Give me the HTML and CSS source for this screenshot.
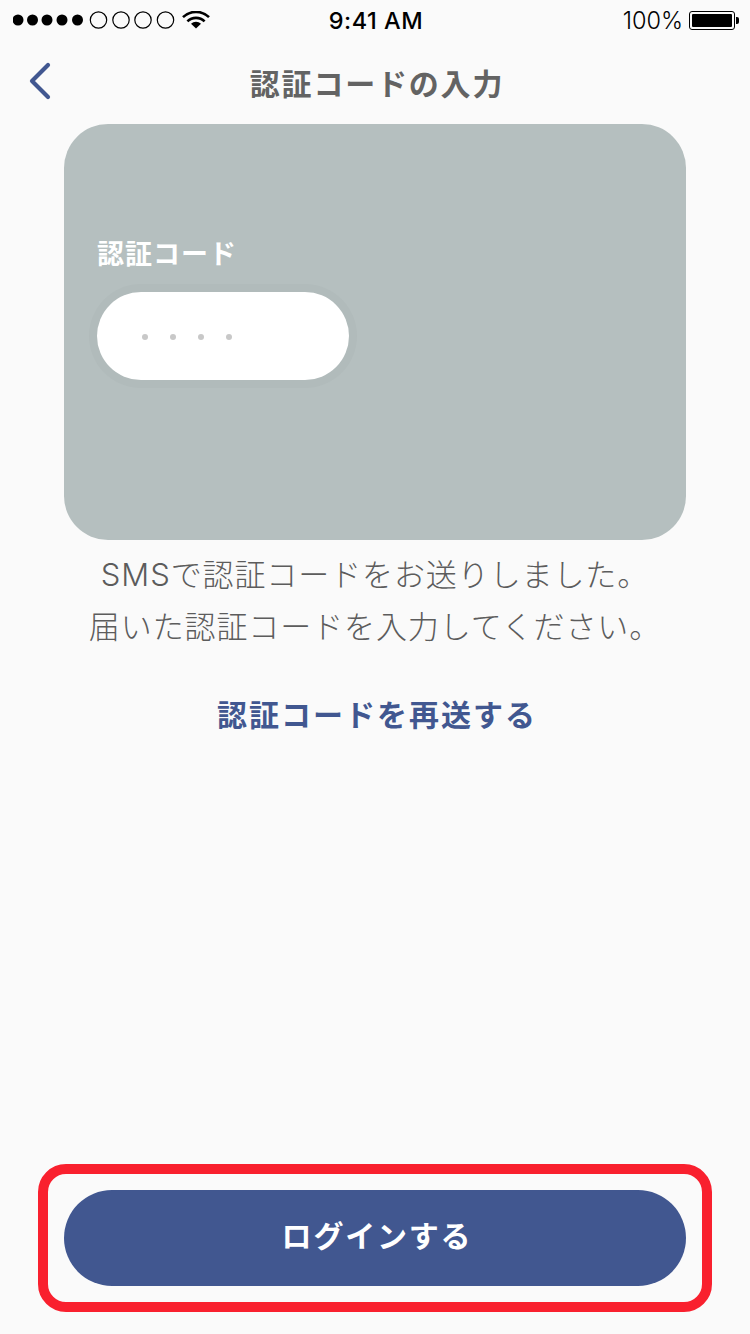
FILE: index.html
```html
<!DOCTYPE html>
<html lang="ja">
<head>
    <meta charset="UTF-8">
    <meta name="viewport" content="width=device-width, initial-scale=1.0">
    <title>認証コードの入力</title>
    <link rel="stylesheet" href="styles.css">
</head>
<body>
    <div class="screen">
        <div class="statusbar">
            <div class="status-left">
                <svg class="signal" width="163" height="20" viewBox="0 0 163 20">
                    <circle cx="5" cy="10" r="5.5" fill="#000"/>
                    <circle cx="19.5" cy="10" r="5.5" fill="#000"/>
                    <circle cx="34" cy="10" r="5.5" fill="#000"/>
                    <circle cx="49" cy="10" r="5.5" fill="#000"/>
                    <circle cx="64.5" cy="10" r="5.5" fill="#000"/>
                    <circle cx="85.5" cy="10" r="8.2" fill="none" stroke="#000" stroke-width="1.2"/>
                    <circle cx="108" cy="10" r="8.2" fill="none" stroke="#000" stroke-width="1.2"/>
                    <circle cx="130" cy="10" r="8.2" fill="none" stroke="#000" stroke-width="1.2"/>
                    <circle cx="152.5" cy="10" r="8.2" fill="none" stroke="#000" stroke-width="1.2"/>
                </svg>
                <svg class="wifi" width="28" height="18" viewBox="0 0 28 18">
                    <path d="M1 6.2a18.5 18.5 0 0 1 26 0" fill="none" stroke="#000" stroke-width="2.6"/>
                    <path d="M5.4 10.4a12.2 12.2 0 0 1 17.2 0" fill="none" stroke="#000" stroke-width="2.6"/>
                    <path d="M9 12.8a7.2 7.2 0 0 1 10 0L14 17.6z" fill="#000"/>
                </svg>
            </div>
            <div class="status-time">9:41 AM</div>
            <div class="status-right">
                <span>100%</span>
                <div class="battery"><div class="battery-level"></div></div>
                <div class="battery-tip"></div>
            </div>
        </div>

        <div class="navbar">
            <svg class="back" width="24" height="38" viewBox="0 0 24 38">
                <path d="M20 3L4 19l16 16" fill="none" stroke="#415790" stroke-width="4.2" stroke-linecap="round" stroke-linejoin="round"/>
            </svg>
            <h1 class="title">認証コードの入力</h1>
        </div>

        <div class="card">
            <label class="code-label" for="code">認証コード</label>
            <div class="code-input" id="code">
                <span class="dot"></span>
                <span class="dot"></span>
                <span class="dot"></span>
                <span class="dot"></span>
            </div>
        </div>

        <p class="message">SMSで認証コードをお送りしました。<br>届いた認証コードを入力してください。</p>
        <a class="resend" href="#">認証コードを再送する</a>

        <div class="footer">
            <div class="highlight">
                <button class="login" type="button">ログインする</button>
            </div>
        </div>
    </div>
</body>
</html>
```

FILE: styles.css
```css
* {
    box-sizing: border-box;
}
body {
    margin: 0;
    background: #fafafa;
    font-family: "Noto Sans CJK JP", "Noto Sans", sans-serif;
}
.screen {
    width: 750px;
    height: 1334px;
    display: flex;
    flex-direction: column;
    overflow: hidden;
}
.statusbar {
    height: 40px;
    padding: 0 11px 0 13px;
    display: grid;
    grid-template-columns: 1fr auto 1fr;
    align-items: center;
    font-family: "Inter", "Liberation Sans", sans-serif;
    font-size: 23.5px;
    color: #000;
}
.status-left {
    display: flex;
    align-items: center;
    gap: 6px;
}
.status-time {
    font-weight: 500;
    letter-spacing: 0.5px;
}
.status-right {
    display: flex;
    align-items: center;
    justify-content: flex-end;
    font-weight: 300;
}
.battery {
    width: 46px;
    height: 19px;
    margin-left: 6px;
    padding: 2px;
    border: 1px solid #000;
    border-radius: 3px;
}
.battery-level {
    height: 100%;
    background: #000;
    border-radius: 1px;
}
.battery-tip {
    width: 3px;
    height: 7px;
    background: #000;
    margin-left: 1px;
    border-radius: 0 2px 2px 0;
}
.navbar {
    height: 84px;
    display: flex;
    align-items: center;
    justify-content: center;
    position: relative;
}
.back {
    position: absolute;
    left: 28px;
    top: 22px;
}
.title {
    margin: 0;
    padding-left: 4px;
    font-size: 30px;
    font-weight: 700;
    letter-spacing: 1.8px;
    color: #636363;
}
.card {
    width: 622px;
    height: 416px;
    margin: 0 auto;
    padding: 106px 0 0 33px;
    background: #b5bfbf;
    border-radius: 44px;
}
.code-label {
    display: block;
    font-size: 27px;
    line-height: 46px;
    font-weight: 700;
    letter-spacing: 1px;
    color: #fff;
}
.code-input {
    width: 252px;
    height: 88px;
    margin-top: 16px;
    padding: 2px 0 0 45px;
    display: flex;
    align-items: center;
    gap: 22px;
    background: #fff;
    border-radius: 44px;
    box-shadow: 0 0 0 8px #b1bbbb;
}
.dot {
    width: 6px;
    height: 6px;
    background: #c8c8c8;
    border-radius: 50%;
}
.message {
    margin: 9px 0 0;
    font-family: "Inter", "Noto Sans CJK JP", sans-serif;
    font-size: 31px;
    line-height: 52px;
    letter-spacing: 0.9px;
    font-weight: 300;
    text-align: center;
    color: #5c5c5c;
}
.resend {
    margin-top: 34px;
    padding-left: 4px;
    font-size: 30px;
    line-height: 52px;
    font-weight: 700;
    letter-spacing: 2px;
    text-align: center;
    text-decoration: none;
    color: #415790;
}
.footer {
    margin-top: auto;
    padding: 0 38px 22px;
}
.highlight {
    padding: 16px;
    border: 10px solid #f9202e;
    border-radius: 28px;
}
.login {
    display: block;
    width: 100%;
    height: 96px;
    padding: 0 0 9px 4px;
    border: none;
    border-radius: 48px;
    background: #415790;
    font-family: inherit;
    font-size: 30px;
    font-weight: 700;
    letter-spacing: 1.8px;
    color: #fff;
}
```
